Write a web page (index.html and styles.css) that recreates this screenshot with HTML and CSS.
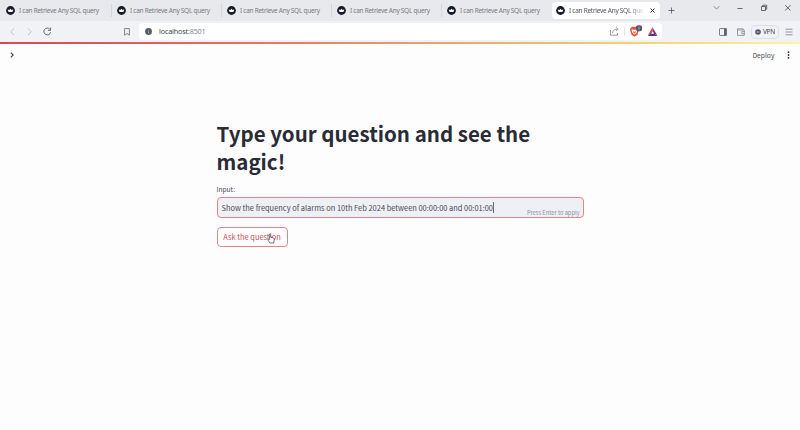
FILE: index.html
```html
<!DOCTYPE html>
<html lang="en">
<head>
<meta charset="utf-8">
<title>I can Retrieve Any SQL query</title>
<link rel="stylesheet" href="styles.css">
</head>
<body>
<svg width="0" height="0" class="defs"><symbol id="fav" viewBox="0 0 9 9"><circle cx="4.5" cy="4.5" r="4.4" fill="#171b28"/><path d="M1.700 3.500l1.600.6 1.200-1.300 1.200 1.300 1.600-.6-.9 2.600H2.600z" fill="#fff"/></symbol></svg>
<header class="tabs">
  <div class="tab"><svg class="fav"><use href="#fav"/></svg><span>I can Retrieve Any SQL query</span></div>
  <div class="tab"><svg class="fav"><use href="#fav"/></svg><span>I can Retrieve Any SQL query</span></div>
  <div class="tab"><svg class="fav"><use href="#fav"/></svg><span>I can Retrieve Any SQL query</span></div>
  <div class="tab"><svg class="fav"><use href="#fav"/></svg><span>I can Retrieve Any SQL query</span></div>
  <div class="tab last"><svg class="fav"><use href="#fav"/></svg><span>I can Retrieve Any SQL query</span></div>
  <div class="tab active"><svg class="fav"><use href="#fav"/></svg><span class="title">I can Retrieve Any SQL que</span><svg class="close" viewBox="0 0 5 5"><path d="M.5.5l4 4m0-4l-4 4" stroke="#333" fill="none"/></svg></div>
  <svg class="plus" viewBox="0 0 7 7"><path d="M3.5.5v6M.5 3.5h6" stroke="#555" stroke-width=".8"/></svg>
  <svg class="window" viewBox="0 0 88 16" fill="none" stroke="#444" stroke-width=".8"><path d="M1.700 6.200l2.800 2.900 2.800-2.900" stroke="#777"/><path d="M25.500 8.500h5"/><path d="M49.500 6.500h4v4h-4zM50.700 6.300V5.200h4v4h-1"/><path d="M73.200 5.200l5.300 5.300m0-5.300l-5.300 5.300"/></svg>
</header>
<nav class="toolbar">
  <svg class="navicons" viewBox="0 0 60 20" fill="none" stroke-width=".9"><path d="M14 6.500l-3.300 3.300 3.300 3.300M28 6.500l3.300 3.300-3.300 3.300" stroke="#b9bbc0"/><path d="M49.800 7.200a3.400 3.400 0 1 0 .8 3M50.600 5.600v2.700h-2.600" stroke="#55585e"/></svg>
  <svg class="bookmark" viewBox="0 0 6 8" fill="none" stroke="#777" stroke-width=".9"><path d="M.6.6h4.800v6.600L3 5.500.6 7.200z"/></svg>
  <div class="address">
    <svg class="info" viewBox="0 0 7 7"><circle cx="3.500" cy="3.500" r="3.400" fill="#555a61"/><path d="M3.500 3.200v2.200M3.500 1.600v.8" stroke="#fff" stroke-width=".5"/></svg>
    <span class="host">localhost<i>:8501</i></span>
    <svg class="extras" viewBox="0 0 52 20" fill="none"><path d="M.5 8v5.200h7V11M2.500 11c.2-2.600 1.800-3.800 5-3.800M6 5.200l2 2-2 2" stroke="#81848a" stroke-width=".8"/><path d="M14.500 5.500v8" stroke="#d5d6da" stroke-width=".7"/><path d="M20.400 6.300L22 4.800h5l1.600 1.500.3 1.600-1.400 4.800-3 2.100-3-2.100L20.100 8z" fill="#e35336"/><path d="M21.600 7.300l2 .4h1.800l2-.4-.5 2.900-2.400 2.600-2.400-2.600z" fill="#fff"/><path d="M23.300 9l1.200 1 1.200-1v1.500l-1.200.9-1.200-.9z" fill="#e35336"/><rect x="26" y="3.200" width="6" height="6" rx="2" fill="#565569"/><path d="M29 4.700v3" stroke="#c9c9d0" stroke-width=".8"/><path d="M42.500 6L38 14h9z" fill="#fff"/><path d="M42.500 5.300L38 13.300l3-1.200 1.700-3z" fill="#e04435"/><path d="M42.500 5.300l4.700 8-3-1.300-1.700-3z" fill="#9b2a7f"/><path d="M37.700 13.900h9.800l-3-2.100h-4z" fill="#51319a"/></svg>
  </div>
  <svg class="panel" viewBox="0 0 8 8"><rect x=".5" y=".5" width="7" height="7" rx=".6" fill="none" stroke="#61656d" stroke-width=".8"/><path d="M5 .5h2.500v7H5z" fill="#61656d"/></svg>
  <svg class="wallet" viewBox="0 0 8 8" fill="none" stroke="#85898f" stroke-width=".8"><path d="M.5 2h6.800v5.400H.5V.8h5.700V2M7.300 3.600H4.800v2.100h2.500"/></svg>
  <div class="vpn"><svg viewBox="0 0 6 6"><circle cx="3" cy="3" r="2.800" fill="#555776"/><path d="M1.700 3h2.600" stroke="#ddd" stroke-width=".8"/></svg><span>VPN</span></div>
  <svg class="menu" viewBox="0 0 8 8" stroke="#7b7e85" stroke-width=".8"><path d="M.5 1.200h7M.5 4h7M.5 6.800h7"/></svg>
</nav>
<div class="rainbow"></div>
<div class="apphead">
  <svg class="expand" viewBox="0 0 4 6" fill="none" stroke="#3c3e45" stroke-width="1.100"><path d="M.8.6L3.200 3 .8 5.400"/></svg>
  <span class="deploy">Deploy</span>
  <svg class="dots" viewBox="0 0 3 8" fill="#292b33"><circle cx="1.500" cy="1.200" r=".9"/><circle cx="1.500" cy="4" r=".9"/><circle cx="1.500" cy="6.800" r=".9"/></svg>
</div>
<main>
  <h1>Type your question and see the magic!</h1>
  <label>Input:</label>
  <div class="field"><span class="value">Show the frequency of alarms on 10th Feb 2024 between 00:00:00 and 00:01:00</span><b class="caret"></b><small>Press Enter to apply</small></div>
  <button>Ask the question</button>
  <svg class="hand" viewBox="0 0 8 11"><path d="M2.300 6V1.300q.7-1 1.400 0v3l3 .8q.8.400.6 1.500L6.600 10H3L.7 6.800q.2-1 1.600-.2z" fill="#fff" stroke="#333" stroke-width=".7"/></svg>
</main>
</body>
</html>
```

FILE: styles.css
```css
* { box-sizing: border-box; }
body { margin: 0; width: 800px; height: 430px; overflow: hidden; background: #fdfdfd; font-family: "Noto Sans CJK SC", sans-serif; color: #31333f; }
svg { display: block; flex: none; }
.defs { position: absolute; }
.tabs { display: flex; height: 21px; background: #e8e9ed; font: 6.5px/20px "Noto Sans", sans-serif; letter-spacing: -.28px; color: #797a80; }
.tab { display: flex; align-items: center; width: 110px; height: 20px; padding-left: 6px; white-space: nowrap; position: relative; }
.tab span { position: relative; top: .5px; }
.tab:first-child { width: 111px; }
.tab:not(.active):not(.last)::after { content: ""; position: absolute; right: -1px; top: 4px; width: 1px; height: 13px; background: #d7d5da; }
.fav { width: 9px; height: 9px; margin-right: 4px; }
.tab.active { width: 108px; height: 17px; margin: 2px 0 0 1px; padding-left: 4px; background: #fff; border-radius: 4px; color: #55575c; line-height: 17px; }
.tab .title { top: 0; width: 76px; -webkit-mask-image: linear-gradient(90deg, #000 78%, transparent); mask-image: linear-gradient(90deg, #000 78%, transparent); }
.close { width: 5px; height: 5px; margin-left: 5px; }
.plus { width: 7px; height: 7px; margin: 7px 0 0 8px; }
.window { width: 88px; height: 16px; margin-left: 37px; }
.toolbar { display: flex; align-items: center; height: 21px; background: #f1f2f6; }
.navicons { width: 60px; height: 20px; }
.bookmark { width: 6px; height: 8px; margin-left: 64px; }
.address { display: flex; align-items: center; width: 523px; height: 17px; margin-left: 9px; padding-left: 6px; background: #fff; border-radius: 4px; }
.info { width: 7px; height: 7px; }
.host { margin-left: 7px; font: 7.2px/17px "Noto Sans", sans-serif; letter-spacing: -.16px; color: #44474d; }
.host i { font-style: normal; color: #85878c; }
.extras { width: 52px; height: 20px; margin-left: auto; }
.panel { width: 8px; height: 8px; margin-left: 57px; }
.wallet { width: 8px; height: 8px; margin-left: 10px; }
.vpn { display: flex; align-items: center; justify-content: center; gap: 2px; width: 28px; height: 14px; margin-left: 6px; border: 1px solid #dedfe5; border-radius: 4px; font: 6.5px/12px "Noto Sans", sans-serif; letter-spacing: -.2px; color: #44464c; }
.vpn svg { width: 6px; height: 6px; }
.menu { width: 8px; height: 8px; margin-left: 6px; }
.rainbow { height: 2px; background: linear-gradient(90deg, #dc4652, #e8645a 25%, #efa16b 55%, #f4c967 75%, #fbf7a0); }
.apphead { display: flex; align-items: center; height: 22px; padding-left: 9.5px; }
.expand { width: 4px; height: 6px; }
.deploy { margin-left: 739px; width: 22px; font-size: 6.7px; line-height: 12px; white-space: nowrap; color: #484a54; }
.dots { width: 3px; height: 8px; margin-left: 12.5px; }
main { width: 367px; margin: 53px 0 0 216.5px; position: relative; }
h1 { margin: 0; padding-top: 1px; font-size: 20.500px; line-height: 27.500px; font-weight: 700; color: #292b36; }
label { display: block; margin-top: 8px; font-size: 6.6px; line-height: 12px; color: #484a54; }
.field { display: flex; align-items: center; position: relative; height: 21px; margin-top: 2px; padding-left: 4px; border: 1px solid #e2848c; border-radius: 4px; background: #eff0f5; white-space: nowrap; }
.value { font-size: 7.45px; line-height: 19px; color: #484a54; }
.caret { width: 1px; height: 11px; background: #666976; }
.field small { position: absolute; right: 3px; bottom: 0; font-size: 5.7px; line-height: 8px; color: #8d919c; }
button { display: block; width: 71px; height: 20px; margin-top: 9px; padding: 0; border: 1px solid #e2848c; border-radius: 4px; background: #fff; color: #cf4b57; font: 7.45px/18px "Noto Sans CJK SC", sans-serif; white-space: nowrap; }
.hand { position: absolute; left: 50px; top: 114px; width: 8px; height: 11px; }
```
